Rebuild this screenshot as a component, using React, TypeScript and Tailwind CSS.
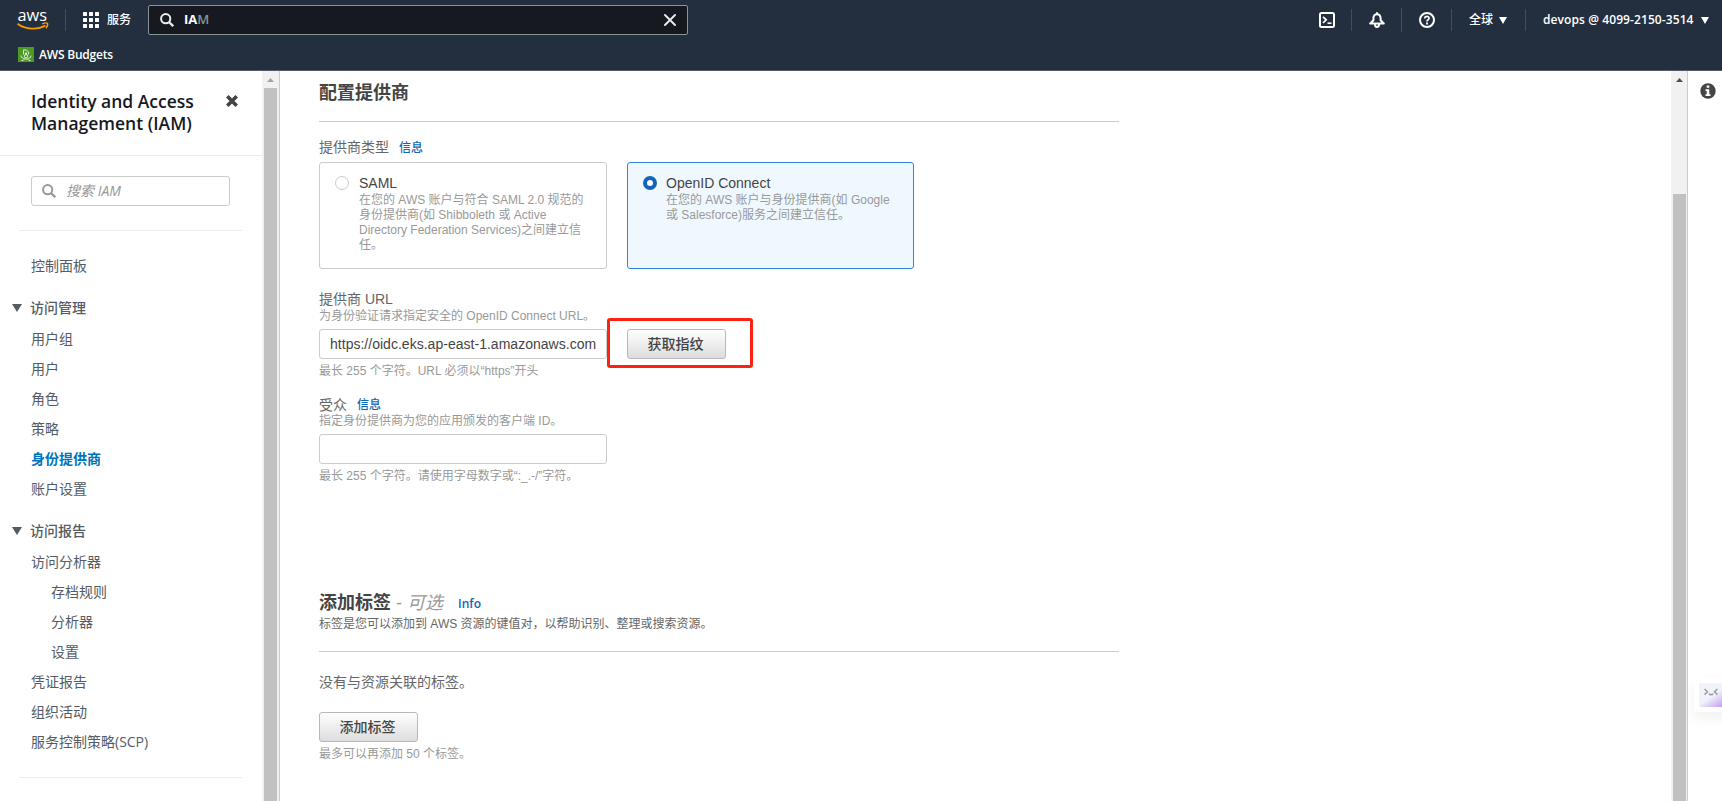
import type { ReactNode } from "react";

const ember = "font-['Open_Sans','Noto_Sans_CJK_SC',sans-serif]";

function Caret({ className = "" }: { className?: string }) {
  return (
    <svg className={className} viewBox="0 0 10 8" preserveAspectRatio="none" fill="currentColor">
      <path d="M0 0h10L5 8z" />
    </svg>
  );
}

function Magnifier({ className = "" }: { className?: string }) {
  return (
    <svg className={className} viewBox="0 0 14 14" fill="none" stroke="currentColor" strokeWidth="2">
      <circle cx="5.7" cy="5.7" r="4.6" />
      <path d="M9.2 9.2 13.2 13.2" strokeWidth="2.3" />
    </svg>
  );
}

function AwsLogo() {
  return (
    <svg className="h-[34px] w-8 shrink-0 overflow-visible" viewBox="0 -6 32 34">
      <text
        x="0.5"
        y="11.5"
        fontFamily="Open Sans"
        fontSize="16"
        fontWeight="500"
        fill="#fff"
        textLength="29.5"
        lengthAdjust="spacingAndGlyphs"
      >
        aws
      </text>
      <path d="M0.600 14.800C8.500 21 21 20.800 28.400 16.500" fill="none" stroke="#f90" strokeWidth="1.900" />
      <path d="M25.200 14.900C27.500 13.900 30 13.800 30.500 14.500C31 15.500 30 17.800 28.900 19.200" fill="none" stroke="#f90" strokeWidth="1.400" />
    </svg>
  );
}

function Header() {
  return (
    <header className={`flex h-[71px] shrink-0 flex-col border-b border-[#545b64] bg-[#232f3e] text-white ${ember}`}>
      <div className="flex h-10 items-center pr-[13px] pl-[17px]">
        <AwsLogo />
        <div className="ml-4 h-[22px] w-px bg-[#414d5c]" />
        <svg className="ml-[17px] size-4" viewBox="0 0 16 16" fill="#fff">
          {[0, 6, 12].map((y) => [0, 6, 12].map((x) => <rect key={`${x}-${y}`} x={x} y={y} width="4" height="4" rx="0.5" />))}
        </svg>
        <span className="ml-2 text-xs leading-4 font-medium">服务</span>
        <div className="ml-[17px] flex h-[30px] w-[540px] items-center rounded-[2px] border border-[#879596] bg-[#16191f] pr-[11px] pl-[11px]">
          <Magnifier className="size-[14px] text-[#eaeded]" />
          <span className="ml-[10px] grow text-[13px] font-bold">
            IA<span className="font-semibold text-[#879596]">M</span>
          </span>
          <svg className="size-3" viewBox="0 0 12 12" stroke="#eaeded" strokeWidth="1.900" strokeLinecap="round">
            <path d="M1 1 11 11M11 1 1 11" />
          </svg>
        </div>
        <div className="grow" />
        <svg className="size-4" viewBox="0 0 16 16" fill="none" stroke="#fff" strokeWidth="2">
          <rect x="1" y="1" width="14" height="14" rx="1.500" />
          <path d="M4 4.800 7.200 7.800 4 10.800" strokeWidth="1.700" />
          <path d="M8.500 11.200H12.500" strokeWidth="1.600" />
        </svg>
        <div className="ml-4 h-[22px] w-px bg-[#414d5c]" />
        <svg className="ml-[17px] size-4" viewBox="0 0 16 16" fill="none" stroke="#fff" strokeWidth="2" strokeLinejoin="round">
          <path d="M8 0.300V2" />
          <path d="M1.200 11.500H14.800L11.600 8.200V6C11.400 3.400 10 2.200 8 2.200S4.600 3.400 4.400 6V8.200Z" />
          <path d="M5.900 12C5.900 16 10.100 16 10.100 12" />
        </svg>
        <div className="ml-4 h-6 w-px bg-[#414d5c]" />
        <svg className="ml-[17px] size-4" viewBox="0 0 16 16" fill="none" stroke="#fff" strokeWidth="2">
          <circle cx="8" cy="8" r="7" />
          <path d="M5.700 6.500C5.900 3.600 10.200 3.800 10.100 6.300C10 7.900 8 7.700 8 9.500" strokeWidth="1.700" />
          <path d="M8 10.600V12.500" strokeWidth="1.900" />
        </svg>
        <div className="ml-4 h-[22px] w-px bg-[#414d5c]" />
        <span className="ml-[17px] text-xs leading-4 font-medium">全球</span>
        <Caret className="ml-[6px] h-[7px] w-2" />
        <div className="ml-[18px] h-[22px] w-px bg-[#414d5c]" />
        <span className="ml-[17px] w-[153px] text-xs leading-4 font-semibold tracking-[0.09px] whitespace-nowrap">
          devops @ 4099-2150-3514
        </span>
        <Caret className="ml-[5px] h-[7px] w-2" />
      </div>
      <div className="flex h-[30px] items-center pl-[18px]">
        <svg className="size-4" viewBox="0 0 16 16" fill="none" stroke="#fff" strokeWidth="0.800">
          <rect width="16" height="15" fill="#4b9a22" stroke="none" />
          <path d="M5.500 7.500V3H8.500L10.500 5V7.500M7 6.500H9M8 5V8" />
          <circle cx="8" cy="9.200" r="1.700" />
          <path d="M3 8.500C3 11 5 11.500 6.500 11.300M13 8.500C13 11 11 11.500 9.500 11.300M3.500 13.500H5L6.500 12H9.500L11 13.500H12.500" />
        </svg>
        <span className="ml-[5px] text-xs font-semibold tracking-[-0.2px]">AWS Budgets</span>
      </div>
    </header>
  );
}

function NavItem({ children, nested, active }: { children: ReactNode; nested?: boolean; active?: boolean }) {
  return (
    <li
      className={`h-[30px] text-sm leading-[30px] whitespace-nowrap ${nested ? "pl-[51px]" : "pl-[31px]"} ${
        active ? "font-bold text-[#0073bb]" : "text-[#545b64]"
      }`}
    >
      {children}
    </li>
  );
}

function NavHeading({ children }: { children: ReactNode }) {
  return (
    <div className="flex h-8 items-center pl-3 text-sm font-medium text-[#545b64]">
      <Caret className="h-2 w-[10px]" />
      <span className="ml-2 leading-8">{children}</span>
    </div>
  );
}

function Sidebar() {
  return (
    <nav className={`flex h-full w-[262px] shrink-0 flex-col bg-white ${ember}`}>
      <div className="flex h-[85px] shrink-0 justify-between border-b border-[#eaeded] pt-5 pr-6 pl-[31px]">
        <h1 className="-mt-px text-[17.500px] leading-[22px] font-semibold whitespace-nowrap text-[#16191f]">
          Identity and Access
          <br />
          Management (IAM)
        </h1>
        <svg className="mt-1 size-3" viewBox="0 0 12 12" stroke="#444" strokeWidth="3.600">
          <path d="M1.300 1.300 10.700 10.700M10.700 1.300 1.300 10.700" />
        </svg>
      </div>
      <div className="mt-5 ml-[31px] flex h-[30px] w-[199px] shrink-0 items-center rounded-[3px] border border-[#ccc] pl-[10px] text-[#999]">
        <Magnifier className="size-[14px]" />
        <span className="ml-[10px] text-sm italic">搜索 IAM</span>
      </div>
      <hr className="mt-6 ml-[19px] w-[223px] border-[#eaeded]" />
      <ul className="mt-5">
        <NavItem>控制面板</NavItem>
      </ul>
      <div className="mt-[11px]">
        <NavHeading>访问管理</NavHeading>
        <ul>
          <NavItem>用户组</NavItem>
          <NavItem>用户</NavItem>
          <NavItem>角色</NavItem>
          <NavItem>策略</NavItem>
          <NavItem active>身份提供商</NavItem>
          <NavItem>账户设置</NavItem>
        </ul>
      </div>
      <div className="mt-[11px]">
        <NavHeading>访问报告</NavHeading>
        <ul>
          <NavItem>访问分析器</NavItem>
          <NavItem nested>存档规则</NavItem>
          <NavItem nested>分析器</NavItem>
          <NavItem nested>设置</NavItem>
          <NavItem>凭证报告</NavItem>
          <NavItem>组织活动</NavItem>
          <NavItem>服务控制策略(SCP)</NavItem>
        </ul>
      </div>
      <hr className="mt-5 ml-[19px] w-[223px] border-[#eaeded]" />
    </nav>
  );
}

function Scrollbar({ page }: { page?: boolean }) {
  return (
    <div className={`flex h-full shrink-0 flex-col border-r border-[#ccc] bg-[#f1f1f1] ${page ? "w-[17px]" : "w-[18px]"}`}>
      <div className={`flex h-[17px] shrink-0 items-center justify-center ${page ? "text-[#505050]" : "text-[#a3a3a3]"}`}>
        <Caret className="mt-px h-1 w-[7px] rotate-180" />
      </div>
      <div className={`ml-[2px] w-[13px] grow bg-[#c1c1c1] ${page ? "mt-[106px]" : ""}`} />
    </div>
  );
}

function TypeCard({ title, selected, children }: { title: string; selected?: boolean; children: ReactNode }) {
  return (
    <div
      className={`flex h-[107px] rounded-[3px] border pt-[13px] pl-[15px] ${
        selected ? "w-[287px] border-[#3184e0] bg-[#f0f8ff]" : "w-[288px] border-[#ccc]"
      }`}
    >
      <div
        className={`size-[14px] shrink-0 rounded-full bg-white ${selected ? "border-4 border-[#1166bb]" : "border border-[#ccc]"}`}
      />
      <div className={`-mt-px ${selected ? "ml-[9px]" : "ml-[10px]"}`}>
        <div className="text-sm leading-4 text-[#444]">{title}</div>
        <div className="mt-[2px] text-xs leading-[15px] whitespace-nowrap text-[#999]">{children}</div>
      </div>
    </div>
  );
}

function GradientButton({ children }: { children: ReactNode }) {
  return (
    <button className="h-[30px] w-[99px] rounded-[3px] border border-[#b8b8b8] bg-linear-to-b from-white to-[#dddddd] pr-[2px] text-sm leading-7 font-medium text-[#444]">
      {children}
    </button>
  );
}

function Hint({ children }: { children: ReactNode }) {
  return <p className="text-xs leading-4 whitespace-nowrap text-[#999]">{children}</p>;
}

function InfoLink({ children }: { children: ReactNode }) {
  return <a className="text-xs leading-4 font-medium text-[#1166bb]">{children}</a>;
}

function Content() {
  return (
    <main className="h-full grow overflow-hidden bg-white pt-[9px] pl-[39px] font-['Liberation_Sans','Noto_Sans_CJK_SC',sans-serif] text-[#666]">
      <section className="w-[800px]">
        <h2 className="h-[42px] border-b border-[#ccc] text-lg leading-[26px] font-bold text-[#444]">配置提供商</h2>
        <div className="mt-[15px] flex h-[25px] items-start gap-[10px] text-sm leading-5">
          <span>提供商类型</span>
          <span className="mt-[1px] flex h-5 items-center">
            <InfoLink>信息</InfoLink>
          </span>
        </div>
        <div className="flex gap-5">
          <TypeCard title="SAML">
            在您的 AWS 账户与符合 SAML 2.0 规范的
            <br />
            身份提供商(如 Shibboleth 或 Active
            <br />
            Directory Federation Services)之间建立信
            <br />
            任。
          </TypeCard>
          <TypeCard title="OpenID Connect" selected>
            在您的 AWS 账户与身份提供商(如 Google
            <br />
            或 Salesforce)服务之间建立信任。
          </TypeCard>
        </div>
        <div className="mt-5 text-sm leading-5">提供商 URL</div>
        <div className="-mt-px mb-[5px]">
          <Hint>为身份验证请求指定安全的 OpenID Connect URL。</Hint>
        </div>
        <div className="flex h-[30px]">
          <div className="w-[288px] overflow-hidden rounded-[3px] border border-[#ccc] px-[10px] text-sm leading-7 tracking-[0.02px] whitespace-nowrap text-[#444]">
            https://oidc.eks.ap-east-1.amazonaws.com
          </div>
          <div className="relative ml-5">
            <GradientButton>获取指纹</GradientButton>
            <div className="absolute -top-[11px] -left-5 h-[50px] w-[146px] rounded-[3px] border-[3px] border-[#fe2010]" />
          </div>
        </div>
        <div className="mt-1">
          <Hint>最长 255 个字符。URL 必须以“https”开头</Hint>
        </div>
        <div className="mt-4 flex h-5 items-center gap-[10px] text-sm leading-5">
          <span>受众</span>
          <InfoLink>信息</InfoLink>
        </div>
        <div className="-mt-[2px] mb-[5px]">
          <Hint>指定身份提供商为您的应用颁发的客户端 ID。</Hint>
        </div>
        <div className="h-[30px] w-[288px] rounded-[3px] border border-[#ccc]" />
        <div className="mt-1">
          <Hint>最长 255 个字符。请使用字母数字或“:_.-/”字符。</Hint>
        </div>
      </section>
      <section className="mt-[106px] w-[800px]">
        <div className="flex h-[26px] items-center text-lg leading-[26px] whitespace-nowrap">
          <h2 className="font-bold text-[#444]">添加标签</h2>
          <span className="ml-[5px] text-[#999]">
            - <i>可选</i>
          </span>
          <a className={`mt-px ml-[15px] text-xs leading-4 font-semibold text-[#1166bb] ${ember}`}>Info</a>
        </div>
        <p className="h-[36px] border-b border-[#ccc] text-xs leading-4">
          标签是您可以添加到 AWS 资源的键值对，以帮助识别、整理或搜索资源。
        </p>
        <p className="mt-5 mb-5 text-sm leading-5">没有与资源关联的标签。</p>
        <GradientButton>添加标签</GradientButton>
        <div className="mt-1">
          <Hint>最多可以再添加 50 个标签。</Hint>
        </div>
      </section>
    </main>
  );
}

function HelpRail() {
  return (
    <aside className="relative h-full w-[34px] shrink-0 overflow-hidden bg-white pt-3 pl-3">
      <svg className="size-4" viewBox="0 0 16 16">
        <circle cx="8" cy="8" r="7.700" fill="#444" />
        <path d="M6.700 2.500H9.300V4.800H6.700zM5.500 6.200H9.300V11.300H10.500V13H5.500V11.300H6.700V7.900H5.500z" fill="#fff" />
      </svg>
      <div className="absolute top-[607px] left-[6px] h-[34px] w-[40px] rounded-[3px] bg-white p-[5px] shadow-[0_6px_14px_rgba(0,0,0,0.06)]">
        <div className="h-6 w-9 rounded-[2px] bg-linear-to-br from-[#f0f4f8] from-45% to-[#b070f0] pt-[5px] pl-[5px]">
          <svg className="h-2 w-[14px]" viewBox="0 0 14 8" fill="none" stroke="#999da3" strokeWidth="1.500">
            <path d="M0.500 1 3.500 3.800 0.500 6.600M13.500 1 10.500 3.800 13.500 6.600M5.200 5.500C5.500 7.200 8.500 7.200 8.800 5.500" />
          </svg>
        </div>
      </div>
    </aside>
  );
}

export default function App() {
  return (
    <div className="flex h-[801px] w-[1722px] flex-col overflow-hidden bg-white">
      <Header />
      <div className="flex min-h-0 grow">
        <Sidebar />
        <Scrollbar />
        <Content />
        <Scrollbar page />
        <HelpRail />
      </div>
    </div>
  );
}
